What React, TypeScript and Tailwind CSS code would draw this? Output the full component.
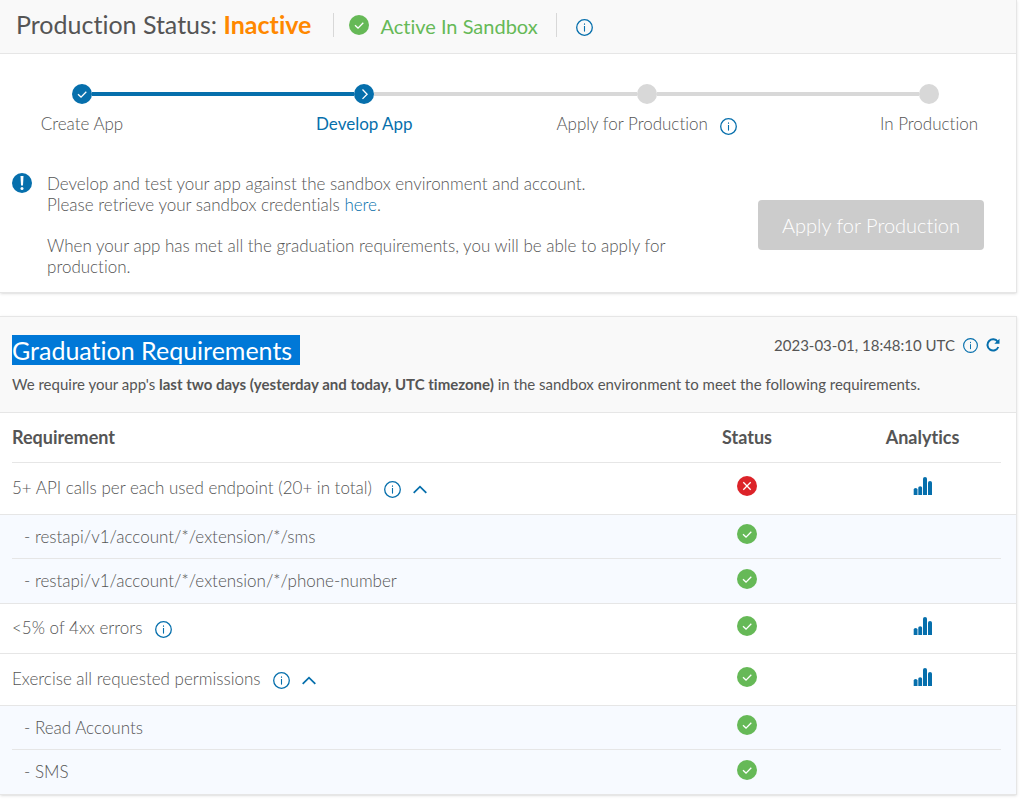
import React, { useState } from 'react';

interface Check {
  name: string;
  passed: boolean;
  height: string;
  items?: string[];
}

const CHECKS: Check[] = [
  {
    name: '5+ API calls per each used endpoint (20+ in total)',
    passed: false,
    height: 'h-[51px]',
    items: ['restapi/v1/account/*/extension/*/sms', 'restapi/v1/account/*/extension/*/phone-number'],
  },
  { name: '<5% of 4xx errors', passed: true, height: 'h-[49px]' },
  {
    name: 'Exercise all requested permissions',
    passed: true,
    height: 'h-[51px]',
    items: ['Read Accounts', 'SMS'],
  },
];

function InfoButton({ label, small }: { label: string; small?: boolean }) {
  return (
    <button type="button" aria-label={label} className="shrink-0 cursor-pointer text-[#066fac]">
      <svg viewBox="0 0 17 17" className={small ? 'block w-[15px] h-[15px]' : 'block w-[17px] h-[17px]'} fill="none" stroke="currentColor">
        <circle cx="8.5" cy="8.5" r="7.8" strokeWidth="1.3" />
        <path d="M8.5 7v5.6" strokeWidth="1.1" />
        <path d="M8.5 4.4v1.4" strokeWidth="1.1" />
      </svg>
    </button>
  );
}

function StatusIcon({ passed }: { passed: boolean }) {
  return (
    <svg viewBox="0 0 20 20" className="w-5 h-5 shrink-0" role="img" aria-label={passed ? 'Passed' : 'Failed'}>
      <circle cx="10" cy="10" r="10" fill={passed ? '#66b957' : '#dc2329'} />
      <path
        d={passed ? 'M6 10.3l3 2.8 5.3-5.3' : 'M6.3 6.3l7.4 7.4M13.7 6.3l-7.4 7.4'}
        fill="none"
        stroke="#fff"
        strokeWidth="1.3"
      />
    </svg>
  );
}

function ChartIcon() {
  return (
    <svg viewBox="0 0 20 20" className="block w-5 h-5" fill="#066fac">
      <path d="M.7 19v-5.5q0-1.5 1.9-1.5t1.9 1.5V19z" />
      <path d="M5.3 19v-7.3q0-1.5 1.9-1.5t1.9 1.5V19z" />
      <path d="M10 19V2.6q0-1.5 2-1.5t2 1.5V19z" />
      <path d="M15 19V6.5Q15 5 17 5t2 1.5V19z" />
    </svg>
  );
}

function StepDot({ state }: { state: 'done' | 'current' | 'todo' }) {
  return (
    <svg viewBox="0 0 20 20" className="w-5 h-5 shrink-0" fill="none" stroke="#fff" strokeWidth="1.3">
      <circle cx="10" cy="10" r="10" stroke="none" fill={state === 'todo' ? '#d8d8d8' : '#066fac'} />
      {state === 'done' && <path d="M6 10.3l3 2.8 5.3-5.3" />}
      {state === 'current' && <path d="M8.5 5.5l4.6 4.7-4.6 4.7" />}
    </svg>
  );
}

function Step({ state, label, info }: { state: 'done' | 'current' | 'todo'; label: string; info?: boolean }) {
  return (
    <li className="w-5 flex flex-col items-center gap-2">
      <StepDot state={state} />
      <div className="flex items-center gap-3 h-6 whitespace-nowrap">
        <span className={state === 'current' ? 'text-[#066fac] font-normal' : ''}>{label}</span>
        {info && (
          <span className="flex pt-1">
            <InfoButton label={`About ${label}`} />
          </span>
        )}
      </div>
    </li>
  );
}

function CheckRows({ check }: { check: Check }) {
  const [open, setOpen] = useState(true);
  const items = check.items ?? [];

  return (
    <tbody className="group">
      <tr>
        <td className="pl-3 border-b border-[#e6e6e6]">
          <div className={`flex items-center pb-px ${check.height}`}>
            <span>{check.name}</span>
            <span className="flex items-center gap-3 pl-3 pt-[3px]">
              <InfoButton label={`About ${check.name}`} />
              {items.length > 0 && (
                <button
                  type="button"
                  aria-label="Toggle details"
                  aria-expanded={open}
                  onClick={() => setOpen(!open)}
                  className="cursor-pointer text-[#066fac]"
                >
                  <svg viewBox="0 0 14 9" className="block w-[14px] h-[9px]" fill="none" stroke="currentColor" strokeWidth="1.8">
                    <path d={open ? 'M.7 7.8L7 1.7l6.3 6.1' : 'M.7 1.2L7 7.3l6.3-6.1'} />
                  </svg>
                </button>
              )}
            </span>
          </div>
        </td>
        <td className="border-b border-[#e6e6e6]">
          <div className={`flex items-center justify-center pb-[6px] ${check.height}`}>
            <StatusIcon passed={check.passed} />
          </div>
        </td>
        <td className="pr-[15px] border-b border-[#e6e6e6]">
          <div className={`flex items-center justify-center pb-[6px] ${check.height}`}>
            <a href="#analytics" aria-label={`Analytics for ${check.name}`}>
              <ChartIcon />
            </a>
          </div>
        </td>
      </tr>
      {open &&
        items.map((item, i) => {
          const last = i === items.length - 1;
          const edge = last ? 'border-b border-[#e6e6e6] group-last:border-b-0' : '';
          const inner = last ? 'h-11' : 'h-11 border-b border-[#e6e6e6]';
          return (
            <tr key={item} className="bg-[#f7faff]">
              <td className={`pl-3 ${edge}`}>
                <div className={`flex items-center pl-3 ${inner}`}>- {item}</div>
              </td>
              <td className={edge}>
                <div className={`flex items-center justify-center pb-[5px] ${inner}`}>
                  <StatusIcon passed />
                </div>
              </td>
              <td className={`pr-[15px] ${edge}`}>
                <div className={inner} />
              </td>
            </tr>
          );
        })}
    </tbody>
  );
}

export default function App() {
  return (
    <main className="min-h-screen bg-white pr-4 font-['Lato',sans-serif] text-[17px] leading-6 font-light text-[#555] [font-variant-ligatures:none]">
      {/* Production status */}
      <section className="border-r border-b border-[#e6e6e6] shadow-sm">
        <header className="flex items-center h-[54px] pl-4 pb-[3px] bg-[#f9f9f9] border-b border-[#e6e6e6] font-normal">
          <h1 className="pb-[3px] text-[25px] leading-8">
            Production Status: <strong className="font-bold text-[#ff8800]">Inactive</strong>
          </h1>
          <div className="flex items-center gap-[11px] ml-[22px] pl-[15px] pr-[18px] h-6 border-x border-[#d8d8d8] text-[20px] text-[#66b957]">
            <StatusIcon passed />
            <span className="pt-px">Active In Sandbox</span>
          </div>
          <span className="flex pl-[19px] pt-1">
            <InfoButton label="About production status" />
          </span>
        </header>

        <ol className="flex items-start pt-[30px] pl-[72px] pr-[77px]">
          <Step state="done" label="Create App" />
          <li aria-hidden="true" className="flex-1 h-1 mt-2 bg-[#066fac]" />
          <Step state="current" label="Develop App" />
          <li aria-hidden="true" className="flex-1 h-1 mt-2 bg-[#d8d8d8]" />
          <Step state="todo" label="Apply for Production" info />
          <li aria-hidden="true" className="flex-1 h-1 mt-2 bg-[#d8d8d8]" />
          <Step state="todo" label="In Production" />
        </ol>

        <div className="flex items-center justify-between pt-[37px] pb-[15px] pl-3 pr-8">
          <div className="flex items-start gap-[15px]">
            <svg viewBox="0 0 20 20" className="w-5 h-5 shrink-0" fill="#fff">
              <circle cx="10" cy="10" r="10" fill="#066fac" />
              <path d="M8.5 3h3l-.5 9.5H9z" />
              <circle cx="10" cy="15.5" r="1.5" />
            </svg>
            <div className="max-w-[640px] leading-[21px] space-y-5">
              <p>
                Develop and test your app against the sandbox environment and account.
                <br />
                Please retrieve your sandbox credentials{' '}
                <a href="#credentials" className="text-[#066fac]">here</a>.
              </p>
              <p>When your app has met all the graduation requirements, you will be able to apply for production.</p>
            </div>
          </div>
          <button type="button" disabled className="shrink-0 h-[50px] px-6 rounded bg-[#ccc] text-[20px] text-white">
            Apply for Production
          </button>
        </div>
      </section>

      {/* Graduation requirements */}
      <section className="mt-[23px] border-t border-r border-b border-[#e6e6e6] shadow-sm">
        <header className="h-[96px] pt-[18px] pl-3 pr-4 bg-[#f9f9f9] border-b border-[#e6e6e6] font-normal">
          <div className="flex items-start justify-between">
            <h2 className="pr-2 bg-[#0078d7] text-[25px] leading-[30px] text-white">Graduation Requirements</h2>
            <div className="flex items-center gap-2 text-[15px] leading-5">
              <time dateTime="2023-03-01T18:48:10Z">2023-03-01, 18:48:10 UTC</time>
              <InfoButton label="About this timestamp" small />
              <button type="button" aria-label="Refresh" className="cursor-pointer text-[#066fac]">
                <svg viewBox="0 0 14 14" className="block w-[14px] h-[14px]" fill="none" stroke="currentColor" strokeWidth="2">
                  <path d="M11.7 3.7A5.6 5.6 0 1 0 12.3 9" />
                  <path d="M13.5.7v5H8.3z" fill="currentColor" stroke="none" />
                </svg>
              </button>
            </div>
          </div>
          <p className="pt-[7px] text-[15px] leading-6">
            We require your app's <strong className="font-bold">last two days (yesterday and today, UTC timezone)</strong> in
            the sandbox environment to meet the following requirements.
          </p>
        </header>

        <table className="w-full table-fixed border-separate border-spacing-0 text-left">
          <thead className="text-[18px] font-bold">
            <tr>
              <th scope="col" className="pl-3">
                <div className="flex items-center h-[50px] pb-0.5 border-b border-[#e6e6e6]">Requirement</div>
              </th>
              <th scope="col" className="w-[194px]">
                <div className="flex items-center justify-center h-[50px] pb-0.5 border-b border-[#e6e6e6]">Status</div>
              </th>
              <th scope="col" className="w-[172px] pr-[15px]">
                <div className="flex items-center justify-center h-[50px] pb-0.5 border-b border-[#e6e6e6]">Analytics</div>
              </th>
            </tr>
          </thead>
          {CHECKS.map((check) => (
            <CheckRows key={check.name} check={check} />
          ))}
        </table>
      </section>
    </main>
  );
}
